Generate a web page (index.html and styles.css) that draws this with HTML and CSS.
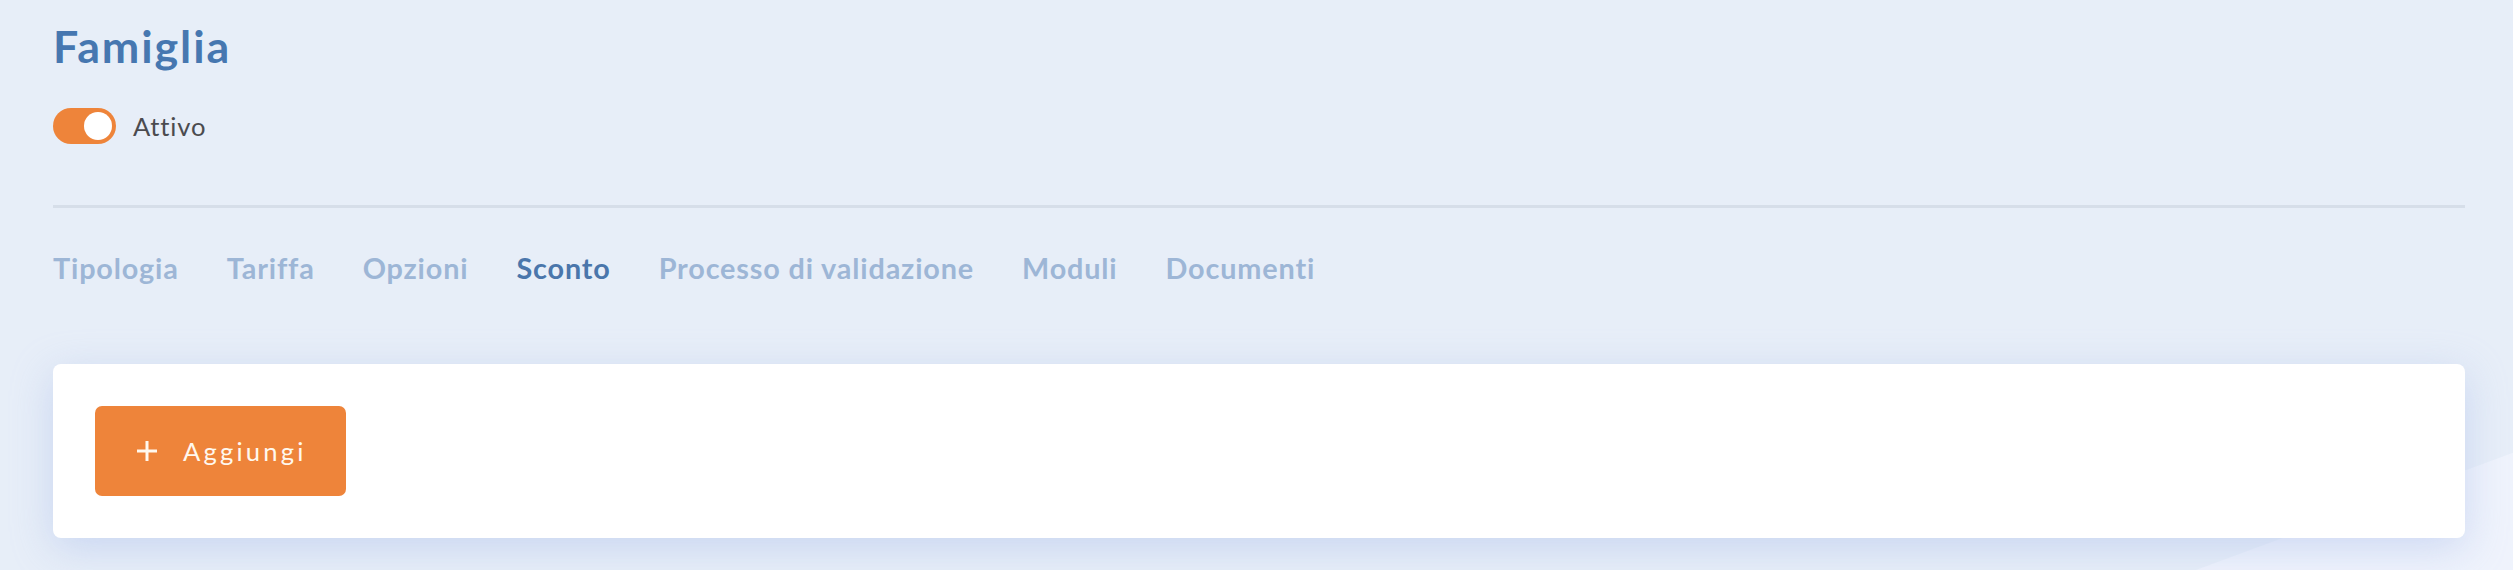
FILE: index.html
```html
<!DOCTYPE html>
<html lang="it">
<head>
  <meta charset="UTF-8">
  <meta name="viewport" content="width=device-width, initial-scale=1.0">
  <title>Famiglia</title>
  <link rel="stylesheet" href="styles.css">
</head>
<body>
  <div class="page">
    <h1 class="title">Famiglia</h1>

    <!-- stato -->
    <label class="status">
      <span class="switch on"><span class="knob"></span></span>
      <span class="status-label">Attivo</span>
    </label>

    <hr class="divider">

    <nav class="tabs">
      <a class="tab">Tipologia</a>
      <a class="tab">Tariffa</a>
      <a class="tab">Opzioni</a>
      <a class="tab active">Sconto</a>
      <a class="tab">Processo di validazione</a>
      <a class="tab">Moduli</a>
      <a class="tab">Documenti</a>
    </nav>

    <div class="card">
      <button class="btn-add">
        <svg class="plus" viewBox="0 0 22 22" width="22" height="22">
          <path d="M11 1v20M1 11h20" stroke="currentColor" stroke-width="3" fill="none"/>
        </svg>
        <span>Aggiungi</span>
      </button>
    </div>
  </div>
</body>
</html>
```

FILE: styles.css
```css
html {
  height: 100%;
}

body {
  margin: 0;
  min-height: 100%;
  font-family: Lato, "Open Sans", sans-serif;
  background: linear-gradient(159.7deg, #e7eef8 1296px, #eff3fc 1297px);
}

.page {
  padding: 24px 48px 0 53px;
}

.title {
  margin: 0;
  font-size: 44.8px;
  line-height: 1;
  font-weight: 700;
  letter-spacing: 1.9px;
  color: #4677b0;
}

.status {
  display: flex;
  align-items: center;
  gap: 17px;
  height: 36px;
  margin-top: 39px;
}

.switch {
  position: relative;
  width: 63px;
  height: 36px;
  border-radius: 18px;
  background-color: #ee843a;
}

.switch .knob {
  position: absolute;
  top: 4px;
  right: 4px;
  width: 28px;
  height: 28px;
  border-radius: 50%;
  background-color: #fff;
}

.status-label {
  font-size: 25.6px;
  line-height: 36px;
  letter-spacing: 0.8px;
  color: #4b4b4f;
}

.divider {
  margin: 61px 0 0;
  border: none;
  height: 3px;
  background-color: #d6dee9;
}

.tabs {
  display: flex;
  gap: 48px;
  margin-top: 42px;
}

.tab {
  font-size: 28.8px;
  line-height: 36px;
  font-weight: 700;
  letter-spacing: 0.85px;
  color: #9db6d6;
  cursor: pointer;
}

.tab.active {
  color: #4a76ab;
}

.card {
  margin-top: 78px;
  padding: 42px;
  background-color: #fff;
  border-radius: 8px;
  box-shadow: 0 10px 40px rgba(165, 185, 232, 0.45);
}

.btn-add {
  display: flex;
  align-items: center;
  gap: 25px;
  height: 90px;
  padding: 0 39px 0 41px;
  border: none;
  border-radius: 7px;
  background-color: #ee843a;
  color: #fff8ee;
  font-family: Lato, sans-serif;
  font-size: 25.6px;
  letter-spacing: 3.2px;
  cursor: pointer;
}

.btn-add .plus {
  display: block;
}
```
